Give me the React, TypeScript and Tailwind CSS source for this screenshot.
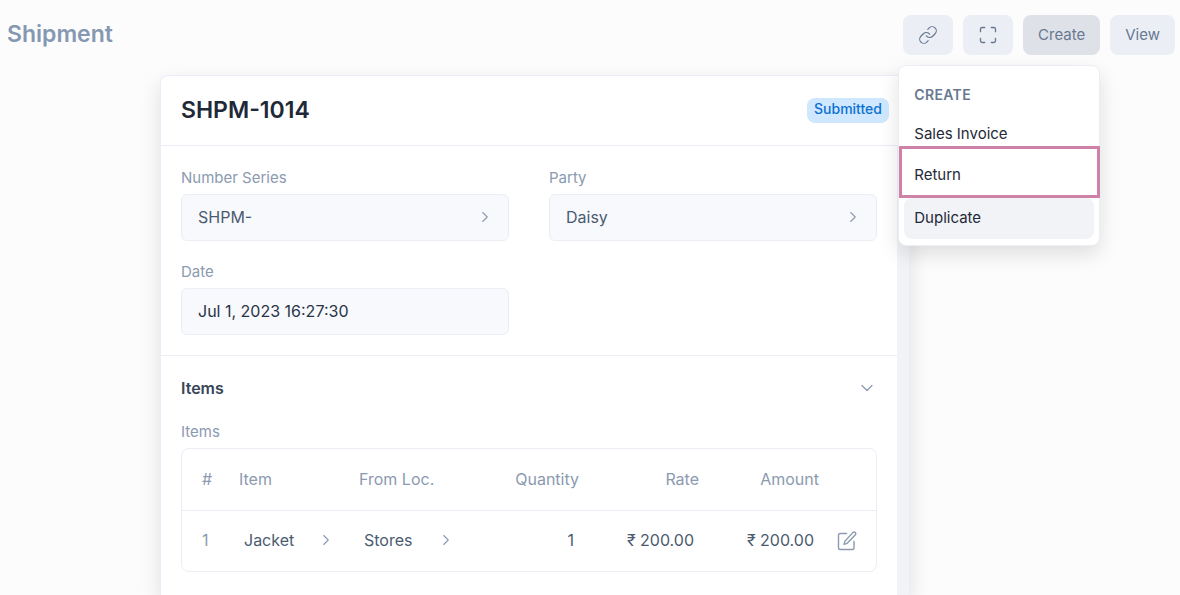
import React from "react";
import { ChevronDown, ChevronRight, Link as LinkIcon, Maximize } from "lucide-react";

const toolButton =
  "flex h-10 items-center justify-center rounded-lg bg-[#ebeef5] text-[15px] leading-5 text-[#687890]";

function EditIcon() {
  return (
    <svg width="20" height="20" viewBox="0 0 20 20" fill="none" stroke="#8b9ab0" strokeWidth="1.4" strokeLinejoin="round" strokeLinecap="round">
      <path d="M9.500 2.500H3A1.500 1.500 0 0 0 1.500 4V17A1.500 1.500 0 0 0 3 18.500h12.500A1.500 1.500 0 0 0 17 17v-6.500" />
      <path d="M15.800 1.600a1.600 1.600 0 0 1 2.400 2.400L10.200 12.300l-3.200 1 1-3.200z" />
    </svg>
  );
}

function LinkField({ label, value }: { label: string; value: string }) {
  return (
    <div>
      <span className="mb-[5px] block text-[15px] leading-[23px] text-[#8b9ab0]">{label}</span>
      <button
        type="button"
        aria-label={label}
        className="flex h-[47px] w-full items-center justify-between rounded-md border border-[#ebeef5] bg-[#f8f9fd] pb-0.5 pl-4 pr-3.5 text-base text-[#4b5b70]"
      >
        {value}
        <ChevronRight size={18} strokeWidth={1.5} className="text-[#8b9ab0]" />
      </button>
    </div>
  );
}

function LinkCell({ value }: { value: string }) {
  return (
    <td className="pb-0.5 pl-[15px] pr-3.5">
      <button type="button" className="flex w-full items-center justify-between">
        {value}
        <ChevronRight size={18} strokeWidth={1.5} className="text-[#8b9ab0]" />
      </button>
    </td>
  );
}

function CreateMenu() {
  return (
    <div className="absolute right-0 top-full z-10 mt-[10px] w-[202px] rounded-lg border border-[#ebeef5] bg-white px-[5px] pb-1.5 pt-[5px] text-[15px] leading-5 text-[#1f2937] shadow-[0_8px_20px_rgba(0,0,0,0.12)]">
      <div className="flex h-11 items-center px-2.5 pt-1 text-sm font-semibold uppercase tracking-wide text-[#687890]">
        Create
      </div>
      <button type="button" className="flex h-[42px] w-full items-center rounded-lg px-2.5 pb-[5px]">Sales Invoice</button>
      <div className="relative">
        <button type="button" className="flex h-[41px] w-full items-center rounded-lg px-2.5 pb-[5px]">Return</button>
        <div className="pointer-events-none absolute -left-[5px] -right-[6px] -top-[11px] bottom-0 border-[3px] border-[#cf82a8]" />
      </div>
      <button type="button" className="flex h-[41px] w-full items-center rounded-lg bg-[#f2f3f7] px-2.5 pb-0.5">Duplicate</button>
    </div>
  );
}

export default function App() {
  return (
    <div className="flex h-screen flex-col overflow-hidden bg-[#fcfcfc] font-['Inter',sans-serif]">
      <header className="flex shrink-0 items-start justify-between pl-[7px] pr-[5px] pt-[15px]">
        <h1 className="text-[23px] font-semibold leading-[38px] text-[#8598b2]">Shipment</h1>
        <div className="flex gap-2.5">
          <button type="button" aria-label="Linked entries" className={`${toolButton} w-[50px]`}>
            <LinkIcon size={20} strokeWidth={1.4} />
          </button>
          <button type="button" aria-label="Toggle full width" className={`${toolButton} w-[50px]`}>
            <Maximize size={20} strokeWidth={1.6} />
          </button>
          <div className="relative">
            <button type="button" aria-expanded="true" className="flex h-10 items-center rounded-lg bg-[#dfe1e8] px-[15px] text-[15px] leading-5 text-[#687890]">
              Create
            </button>
            <CreateMenu />
          </div>
          <button type="button" className={`${toolButton} px-[15px]`}>View</button>
        </div>
      </header>

      <main className="mt-5 flex min-h-0 flex-1 justify-center pr-[110px]">
        <div className="flex w-full max-w-[750px] flex-col rounded-t-lg border border-b-0 border-[#ebeef8] bg-white shadow-[0_8px_20px_rgba(0,0,0,0.12)]">
          <div className="flex h-[70px] shrink-0 items-center justify-between border-b border-[#ebeef5] px-5">
            <h2 className="pb-0.5 text-[23px] font-semibold leading-8 text-[#1f2937]">SHPM-1014</h2>
            <span className="h-[25px] rounded-lg bg-[#cfe7ff] px-[7px] text-sm font-medium leading-[22px] text-[#0b71d2]">Submitted</span>
          </div>
          <div className="min-h-0 flex-1 border-r-12 border-[#f2f3f7]">
            <section className="grid grid-cols-2 gap-x-10 gap-y-[19px] border-b border-[#ebeef5] p-5">
              <LinkField label="Number Series" value="SHPM-" />
              <LinkField label="Party" value="Daisy" />
              <div>
                <label htmlFor="date" className="mb-[5px] block text-[15px] leading-[23px] text-[#8b9ab0]">Date</label>
                <input
                  id="date"
                  readOnly
                  defaultValue="Jul 1, 2023 16:27:30"
                  className="block h-[47px] w-full rounded-md border border-[#ebeef5] bg-[#f8f9fd] px-4 pb-0.5 text-base text-[#283446] outline-none"
                />
              </div>
            </section>
            <section className="p-5">
              <div className="mb-5 flex h-6 items-center justify-between">
                <h3 className="text-base font-semibold text-[#374558]">Items</h3>
                <button type="button" aria-label="Collapse items">
                  <ChevronDown size={20} strokeWidth={1.5} className="text-[#8b9ab0]" />
                </button>
              </div>
              <div className="mb-[5px] text-[15px] leading-[23px] text-[#8b9ab0]">Items</div>
              <div className="rounded-lg border border-[#ebeef5]">
                <table className="w-full table-fixed text-left text-base text-[#4b5b70]">
                  <colgroup>
                    <col className="w-[47px]" />
                    <col />
                    <col />
                    <col />
                    <col />
                    <col />
                    <col className="w-[47px]" />
                  </colgroup>
                  <thead className="text-[#8b9ab0]">
                    <tr className="h-[61px] border-b border-[#ebeef5]">
                      <th className="pl-5 font-normal">#</th>
                      <th className="pl-2.5 font-normal">Item</th>
                      <th className="pl-2.5 font-normal">From Loc.</th>
                      <th className="pr-2.5 text-right font-normal">Quantity</th>
                      <th className="pr-2.5 text-right font-normal">Rate</th>
                      <th className="pr-2.5 text-right font-normal">Amount</th>
                      <th aria-label="Actions" />
                    </tr>
                  </thead>
                  <tbody>
                    <tr className="h-[61px]">
                      <td className="pb-0.5 pl-5 text-[#8b9ab0]">1</td>
                      <LinkCell value="Jacket" />
                      <LinkCell value="Stores" />
                      <td className="pb-0.5 pr-[15px] text-right">1</td>
                      <td className="pb-0.5 pr-[15px] text-right">₹ 200.00</td>
                      <td className="pb-0.5 pr-[15px] text-right">₹ 200.00</td>
                      <td className="pl-2">
                        <button type="button" aria-label="Edit row" className="block">
                          <EditIcon />
                        </button>
                      </td>
                    </tr>
                  </tbody>
                </table>
              </div>
            </section>
          </div>
        </div>
      </main>
    </div>
  );
}
